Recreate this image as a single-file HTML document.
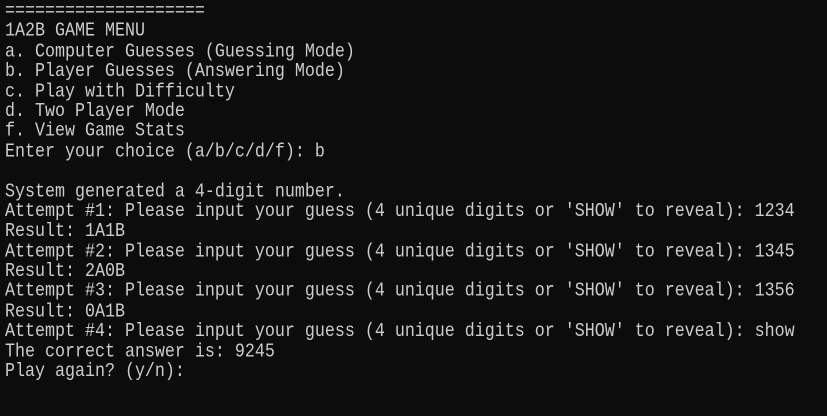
<!DOCTYPE html>
<html><head><meta charset="utf-8"><style>
html,body{margin:0;padding:0;background:#0c0c0c;}
body{width:827px;height:416px;overflow:hidden;}
pre{margin:0;padding:2px 0 0 5px;color:#cccccc;font-family:"Liberation Mono",monospace;font-size:16.67px;line-height:17.39px;white-space:pre;transform:scaleY(1.15);transform-origin:0 0;}
</style></head><body><pre>====================
1A2B GAME MENU
a. Computer Guesses (Guessing Mode)
b. Player Guesses (Answering Mode)
c. Play with Difficulty
d. Two Player Mode
f. View Game Stats
Enter your choice (a/b/c/d/f): b

System generated a 4-digit number.
Attempt #1: Please input your guess (4 unique digits or 'SHOW' to reveal): 1234
Result: 1A1B
Attempt #2: Please input your guess (4 unique digits or 'SHOW' to reveal): 1345
Result: 2A0B
Attempt #3: Please input your guess (4 unique digits or 'SHOW' to reveal): 1356
Result: 0A1B
Attempt #4: Please input your guess (4 unique digits or 'SHOW' to reveal): show
The correct answer is: 9245
Play again? (y/n):</pre></body></html>
